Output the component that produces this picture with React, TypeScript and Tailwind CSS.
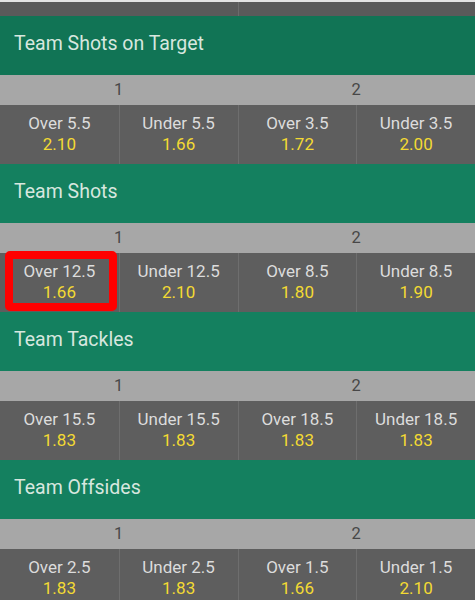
import React from "react"

type Odd = { label: string; price: string }

const markets: { title: string; odds: Odd[]; dark?: boolean }[] = [
  {
    title: "Team Shots on Target",
    dark: true,
    odds: [
      { label: "Over 5.5", price: "2.10" },
      { label: "Under 5.5", price: "1.66" },
      { label: "Over 3.5", price: "1.72" },
      { label: "Under 3.5", price: "2.00" },
    ],
  },
  {
    title: "Team Shots",
    odds: [
      { label: "Over 12.5", price: "1.66" },
      { label: "Under 12.5", price: "2.10" },
      { label: "Over 8.5", price: "1.80" },
      { label: "Under 8.5", price: "1.90" },
    ],
  },
  {
    title: "Team Tackles",
    odds: [
      { label: "Over 15.5", price: "1.83" },
      { label: "Under 15.5", price: "1.83" },
      { label: "Over 18.5", price: "1.83" },
      { label: "Under 18.5", price: "1.83" },
    ],
  },
  {
    title: "Team Offsides",
    odds: [
      { label: "Over 2.5", price: "1.83" },
      { label: "Under 2.5", price: "1.83" },
      { label: "Over 1.5", price: "1.66" },
      { label: "Under 1.5", price: "2.10" },
    ],
  },
]

export default function App() {
  return (
    <div
      className="w-[475px] h-[600px] overflow-hidden bg-[#5e5e5e]"
      style={{ fontFamily: "Roboto, 'Noto Sans', sans-serif" }}
    >
      {/* light edge + tail of the previous market */}
      <div className="h-[2px] bg-[#e4e4e4]" />
      <div className="h-[14px] grid grid-cols-2 bg-[#5a5a5a]">
        <div />
        <div className="border-l border-[#6c6c6c]" />
      </div>

      {markets.map((m, mi) => (
        <section key={m.title}>
          <div
            className={`h-[59px] flex items-center px-[14px] pb-[3px] text-[19.5px] text-[#d7e7df] ${
              m.dark ? "bg-[#117455]" : "bg-[#14805f]"
            }`}
          >
            {m.title}
          </div>
          <div className="h-[30px] grid grid-cols-2 bg-[#a7a7a7] text-[16.5px] text-[#474747]">
            <div className="flex items-center justify-center">1</div>
            <div className="flex items-center justify-center">2</div>
          </div>
          <div className="h-[59px] grid grid-cols-4 bg-[#5e5e5e]">
            {m.odds.map((o, i) => (
              <div
                key={o.label}
                className={`relative flex flex-col items-center justify-center pb-[2px] leading-[21px] text-[17px] ${
                  i > 0 ? "border-l border-[#6e6e6e]" : ""
                }`}
              >
                <span className="text-[#dcdcdc]">{o.label}</span>
                <span className="text-[#f3da33]">{o.price}</span>
                {mi === 1 && i === 0 && (
                  <div className="absolute left-[5px] top-[-2px] w-[112px] h-[60px] border-[8px] border-[#ff0000] rounded-[5px]" />
                )}
              </div>
            ))}
          </div>
        </section>
      ))}
    </div>
  )
}
